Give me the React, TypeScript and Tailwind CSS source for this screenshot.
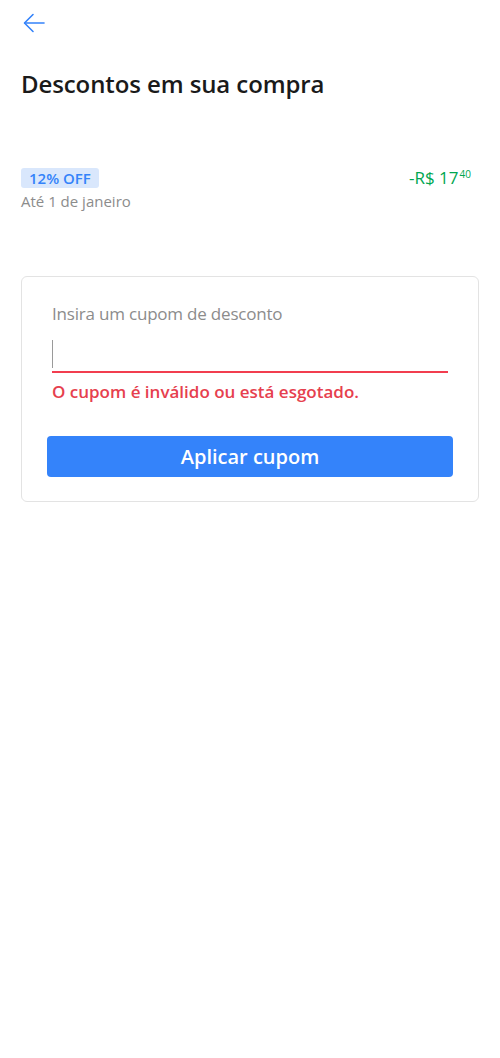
import { useState } from 'react'

const font = { fontFamily: '"Open Sans", "Noto Sans", Arial, sans-serif' }

const BackArrow = () => (
    <svg width="22" height="20" viewBox="0 0 22 20" fill="none" stroke="#3483fa" strokeWidth="1.6" strokeLinecap="round" strokeLinejoin="round">
        <path d="M21 10H2" />
        <path d="M10 1.5L1.5 10L10 18.5" />
    </svg>
)

const App = () => {
    const [coupon, setCoupon] = useState('')

    return (
        <div className="min-h-[1058px] w-[500px] bg-white text-[#1a1a1a]" style={font}>
            <div className="flex h-[46px] items-center pl-[23px]">
                <BackArrow />
            </div>

            <h1 className="mt-[22px] pl-[21px] text-[24px] leading-[32px] font-[550] tracking-[-0.1px]">
                Descontos em sua compra
            </h1>

            <div className="mt-[68px] flex items-start justify-between pl-[21px] pr-[29px]">
                <div className="flex flex-col items-start">
                    <span className="rounded-[3px] bg-[#d9e7fc] px-[8px] text-[15px] leading-[20px] font-semibold text-[#3483fa]">
                        12% OFF
                    </span>
                    <span className="mt-[2px] text-[15px] leading-[22px] text-[#8c8c8c]">Até 1 de janeiro</span>
                </div>
                <span className="mt-[-1px] flex items-start text-[17px] leading-[22px] text-[#00a650]">
                    -R$ 17<span className="mt-[1px] ml-[1px] text-[10px] leading-[12px]">40</span>
                </span>
            </div>

            <div className="mx-[21px] mt-[64px] rounded-[6px] border border-[#e3e3e3] px-[25px] pt-[25px] pb-[24px]">
                <div className="px-[5px]">
                    <label className="block text-[17px] leading-[24px] tracking-[-0.2px] text-[#8c8c8c]">
                        Insira um cupom de desconto
                    </label>
                    <input
                        value={coupon}
                        onChange={(e) => setCoupon(e.target.value)}
                        className="mt-[11px] block h-[36px] w-full border-b-2 border-[#f23d4f] text-[17px] outline-none caret-[#8c8c8c]"
                    />
                    <div className="relative -mt-[33px] mb-[3px] h-[28px] w-[1px] bg-[#9a9a9a]" />
                    <p className="mt-[13px] text-[17px] leading-[22px] font-[550] text-[#e6404e]">
                        O cupom é inválido ou está esgotado.
                    </p>
                </div>
                <button className="mt-[33px] h-[41px] w-full rounded-[4px] bg-[#3483fa] text-[20px] font-[550] text-white">
                    Aplicar cupom
                </button>
            </div>
        </div>
    )
}

export default App
